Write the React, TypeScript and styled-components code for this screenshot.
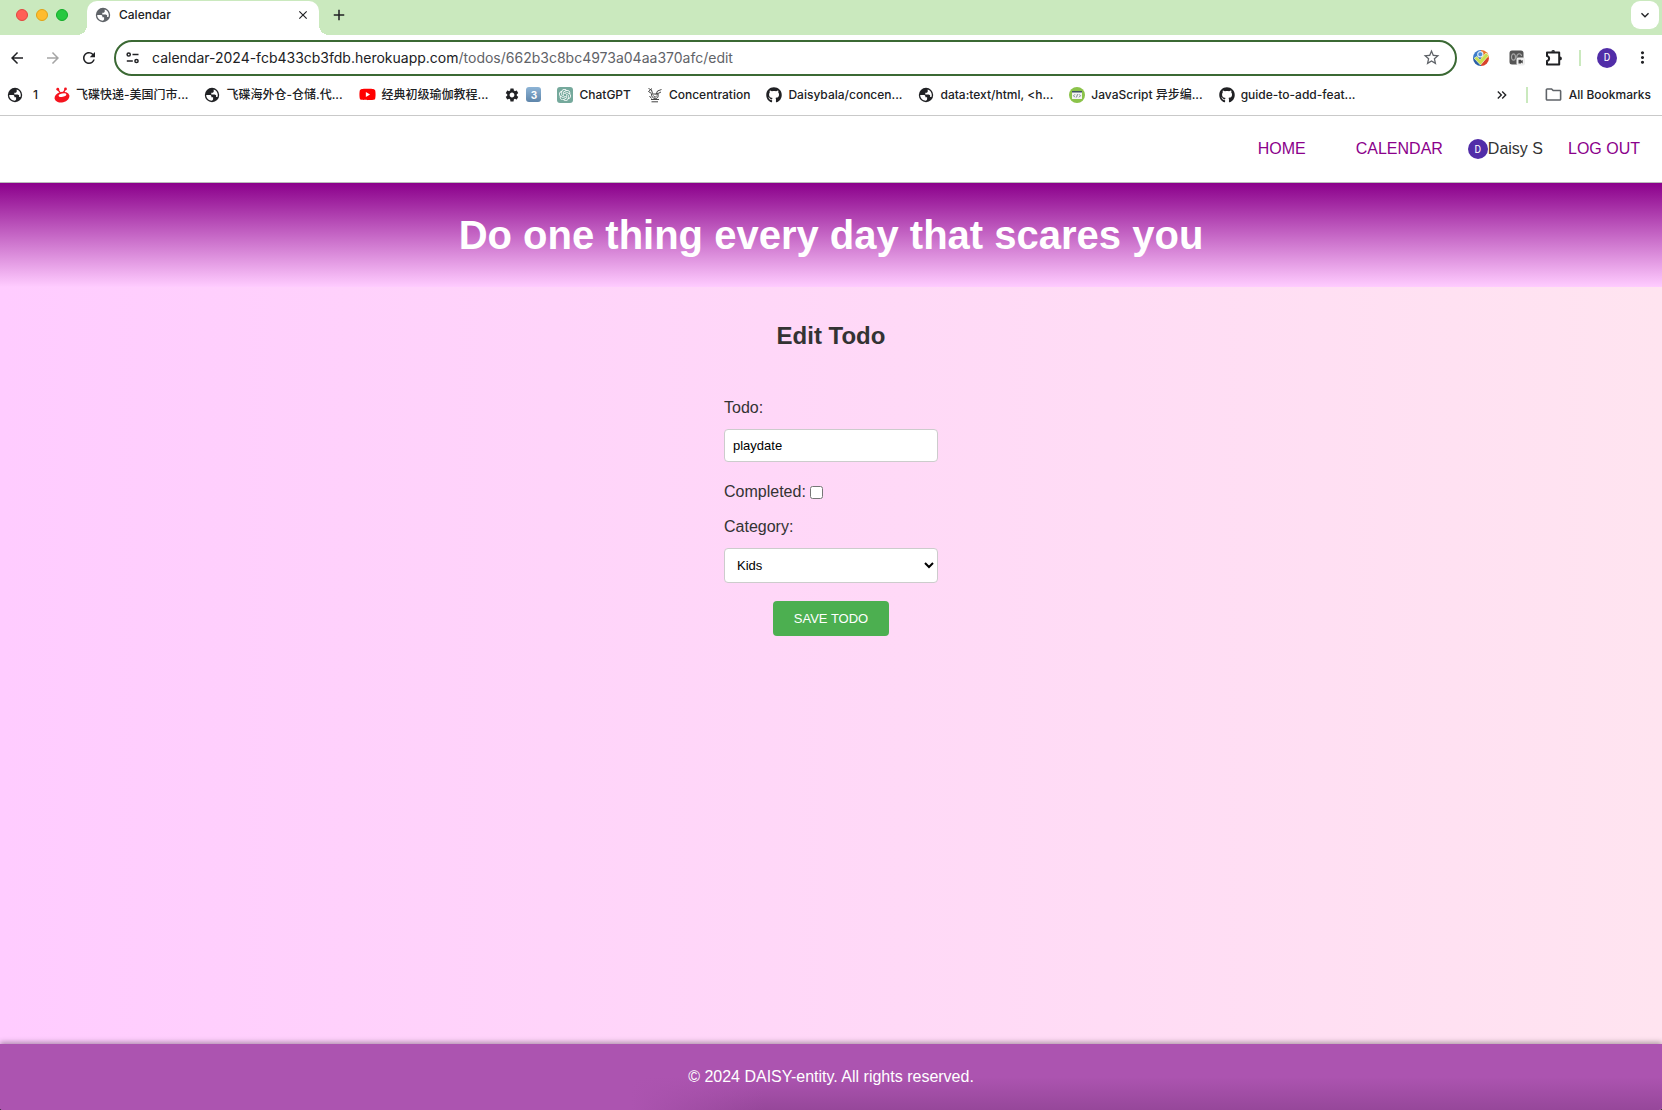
import React from "react";
import styled, { createGlobalStyle } from "styled-components";
import { FaGithub, FaYoutube } from "react-icons/fa";
import {
  MdArrowBack,
  MdArrowForward,
  MdRefresh,
  MdStarBorder,
  MdClose,
  MdAdd,
  MdMoreVert,
  MdSettings,
  MdOutlineFolder,
  MdKeyboardArrowDown,
  MdKeyboardDoubleArrowRight,
} from "react-icons/md";
import { SiOpenai } from "react-icons/si";

const GlobalStyle = createGlobalStyle`
  *, *::before, *::after { box-sizing: border-box; }
  body { margin: 0; color: #333; font-family: "Liberation Sans", Arial, sans-serif; font-size: 16px; }
  a { text-decoration: none; }
  button { font: inherit; color: inherit; background: none; border: 0; padding: 0; }
`;

const Window = styled.div`
  display: flex;
  flex-direction: column;
  min-height: 100vh;
  background: #111;
`;

/* ---------- Browser chrome ---------- */

const Chrome = styled.header`
  font-family: Inter, Roboto, "Noto Sans CJK SC", sans-serif;
  color: #202124;
  background: #fff;
  border-bottom: 1px solid #c9c9c9;
`;

const TabStrip = styled.div`
  display: flex;
  height: 35px;
  padding: 1px 3px 0 16px;
  background: #cae9be;
`;

const Lights = styled.div`
  display: flex;
  gap: 8px;
  padding-top: 8px;
  margin-right: 19px;
`;

const Light = styled.span<{ $fill: string; $edge: string }>`
  width: 12px;
  height: 12px;
  border-radius: 50%;
  background: ${(p) => p.$fill};
  border: 1px solid ${(p) => p.$edge};
`;

const Tab = styled.div`
  position: relative;
  display: flex;
  align-items: center;
  gap: 8px;
  width: 232px;
  padding: 0 9px 7px 8px;
  border-radius: 10px 10px 0 0;
  background: #fff;
  font-size: 12px;
  font-weight: 500;

  &::before,
  &::after {
    content: "";
    position: absolute;
    bottom: 0;
    width: 10px;
    height: 10px;
  }
  &::before {
    left: -10px;
    background: radial-gradient(circle at 0 0, transparent 10px, #fff 10px);
  }
  &::after {
    right: -10px;
    background: radial-gradient(circle at 100% 0, transparent 10px, #fff 10px);
  }
`;

const TabTitle = styled.span`
  flex: 1;
`;

const IconButton = styled.button`
  display: flex;
  align-items: center;
  justify-content: center;
`;

const NewTab = styled(IconButton)`
  height: 28px;
  margin-left: 11px;
`;

const TabSearch = styled(IconButton)`
  width: 28px;
  height: 28px;
  margin-left: auto;
  border-radius: 9px;
  background: #fff;
`;

const Toolbar = styled.div`
  display: flex;
  align-items: center;
  height: 45px;
  padding: 0 10px 0 8px;
`;

const NavButtons = styled.div`
  display: flex;
  gap: 18px;
  margin-right: 16px;
`;

const AddressBar = styled.div`
  display: flex;
  flex: 1;
  align-items: center;
  gap: 12px;
  height: 36px;
  padding: 0 14px 0 10px;
  border: 2px solid #3b6934;
  border-radius: 18px;
  background: #fff;
  font-size: 14px;
`;

const Url = styled.span`
  flex: 1;
`;

const UrlPath = styled.span`
  color: #5f6368;
`;

const ToolbarEnd = styled.div`
  display: flex;
  align-items: center;
  gap: 16px;
  margin-left: 16px;
`;

const Extensions = styled.div`
  display: flex;
  align-items: center;
  gap: 20px;
`;

const Divider = styled.span`
  width: 2px;
  height: 16px;
  background: #cae9be;
`;

const Avatar = styled.span`
  display: inline-flex;
  align-items: center;
  justify-content: center;
  width: 20px;
  height: 20px;
  border-radius: 50%;
  background: #512da8;
  color: #fff;
  font-family: Roboto, sans-serif;
  font-size: 10px;
`;

const Bookmarks = styled.div`
  display: flex;
  align-items: center;
  gap: 16px;
  height: 35px;
  padding: 0 11px 6px 7px;
  font-size: 12px;
  font-weight: 500;
`;

const Bookmark = styled.a<{ $gap?: number }>`
  display: flex;
  align-items: center;
  gap: ${(p) => p.$gap ?? 6}px;
  color: inherit;
  line-height: 16px;
  white-space: nowrap;
`;

const BookmarkText = styled.span`
  height: 16px;
`;

const Keycap = styled.span`
  display: flex;
  align-items: center;
  justify-content: center;
  width: 15px;
  height: 15px;
  border-radius: 3px;
  background: linear-gradient(#8db4d6, #5e85aa);
  color: #fff;
  font-size: 10px;
  font-weight: 700;
`;

const GptIcon = styled.span`
  display: flex;
  align-items: center;
  justify-content: center;
  width: 16px;
  height: 16px;
  border-radius: 3px;
  background: #75a99c;
  color: #fff;
`;

const BookmarkEnd = styled.div`
  display: flex;
  align-items: center;
  gap: 16px;
  margin-left: auto;
`;

/* ---------- Site ---------- */

const Page = styled.div`
  display: flex;
  flex: 1;
  flex-direction: column;
  overflow: hidden;
  border-radius: 0 0 5px 5px / 0 0 2px 2px;
  background: linear-gradient(to right, #fcf, #ffe4f0);
`;

const SiteNav = styled.nav`
  display: flex;
  align-items: center;
  justify-content: flex-end;
  height: 67px;
  padding: 0 22px;
  background: #fff;
  border-bottom: 1px solid #bbb;
`;

const NavLink = styled.a<{ $gap?: number }>`
  margin-right: ${(p) => p.$gap ?? 0}px;
  color: #8b008b;
`;

const User = styled.span`
  display: flex;
  align-items: center;
  margin-right: 25px;
`;

const Banner = styled.h1`
  margin: 0;
  padding: 29px 20px;
  background: linear-gradient(#8b008b, #fcf);
  color: #fff;
  font-size: 40px;
  line-height: 46px;
  text-align: center;
`;

const Main = styled.main`
  display: flex;
  flex: 1;
  flex-direction: column;
  align-items: center;
  padding-top: 35px;
`;

const Title = styled.h2`
  margin: 0 0 48px;
  font-size: 24px;
  line-height: 28px;
`;

const Form = styled.form`
  display: flex;
  flex-direction: column;
  width: 214px;
`;

const Label = styled.label`
  margin-bottom: 11px;
  line-height: 20px;
`;

const TextInput = styled.input`
  height: 33px;
  margin-bottom: 20px;
  padding: 0 8px;
  border: 1px solid #ccc;
  border-radius: 4px;
  background: #fff;
  color: #000;
  font: 13px "Liberation Sans", Arial, sans-serif;
`;

const CheckRow = styled.div`
  display: flex;
  align-items: center;
  gap: 4px;
  margin-bottom: 15px;
  line-height: 20px;
`;

const Checkbox = styled.input`
  width: 13px;
  height: 13px;
  margin: 0;
`;

const Select = styled.select`
  height: 35px;
  margin-bottom: 18px;
  padding: 0 0 0 8px;
  border: 1px solid #ccc;
  border-radius: 4px;
  background: #fff;
  color: #000;
  font: 13px "Liberation Sans", Arial, sans-serif;
`;

const SaveButton = styled.button`
  align-self: center;
  height: 35px;
  padding: 0 21px;
  border-radius: 4px;
  background: #4caf50;
  color: #fff;
  font-size: 13px;
`;

const Footer = styled.footer`
  padding: 23px 20px;
  background:
    linear-gradient(to right, #ac54b0 38%, transparent 46%),
    linear-gradient(#ac54b0 50%, #96479a);
  box-shadow: 0 -2px 5px rgba(0, 0, 0, 0.3);
  color: #fff;
  line-height: 20px;
  text-align: center;
`;

/* ---------- Icons ---------- */

const GlobeIcon = ({ color = "#202124" }: { color?: string }) => (
  <svg width="16" height="16" viewBox="0 0 16 16">
    <circle cx="8" cy="8" r="7.2" fill={color} />
    <path
      d="M2.200 8h3.600c1 0 1.600.700 1.600 1.500v.700h1.700v2.200L8 13.700c-3.300 0-5.800-2.500-5.800-5.700z"
      fill="#fff"
    />
    <path
      d="M9.700 2.500c2.400.700 4.100 2.900 4.100 5.500 0 .800-.200 1.500-.400 2.100h-1.300V8.300l-1.400-.900H7.300V5.700h1.600l.8-1z"
      fill="#fff"
    />
  </svg>
);

const PuzzleIcon = () => (
  <svg width="18" height="18" viewBox="0 0 18 18" fill="none" stroke="#202124">
    <path
      d="M2 3.500h12.200v12H2v-3.400c2.800-.600 2.800-4.400 0-5z"
      strokeWidth="2"
      strokeLinejoin="round"
    />
    <path d="M6.300 2.800a1.900 1.900 0 0 1 3.800 0zM15 7.500a1.900 1.900 0 0 1 0 3.800z" fill="#202124" stroke="none" />
  </svg>
);

const SiteInfoIcon = () => (
  <svg width="14" height="14" viewBox="0 0 14 14" fill="none" stroke="#202124" strokeWidth="1.5">
    <circle cx="2.700" cy="3.500" r="1.600" />
    <path d="M6.500 3.500H12.500M.800 10h6" />
    <circle cx="10.500" cy="10" r="1.600" />
  </svg>
);

const SaucerIcon = () => (
  <svg width="16" height="16" viewBox="0 0 17 17">
    <path d="M4 2.500 6.500 6M12 2.500 10 6" stroke="#f5141e" strokeWidth="1.400" />
    <circle cx="4" cy="2.400" r="1.500" fill="#f5141e" />
    <circle cx="12.200" cy="2" r="1.500" fill="#f5141e" />
    <ellipse cx="8.500" cy="10.800" rx="8" ry="5.600" fill="#f5141e" transform="rotate(-14 8.500 10.800)" />
    <ellipse cx="9" cy="8.600" rx="4.200" ry="1.700" fill="#fff" transform="rotate(-14 9 8.600)" />
  </svg>
);

const SketchIcon = () => (
  <svg width="16" height="16" viewBox="0 0 16 16" fill="none" stroke="#444" strokeWidth="1">
    <path d="M1.500 1.500l3 1.500 1 3.500M5 1.500l-3.500 3 3 2M14.500 2.500l-4 1.500-1.500 3.500M14 5l-4 2M4.500 7c0 3 1.500 4.500 4 4.500s3-2 2.500-4.500zM4 12.500h8M4.500 14.800h6.500M2.500 9l2 2.500M6.500 8.500l1.500 2 2-2" />
  </svg>
);

const CodeIcon = () => (
  <svg width="16" height="16" viewBox="0 0 16 16">
    <circle cx="8" cy="8" r="8" fill="#8bc34a" />
    <rect x="3" y="4" width="10" height="8" rx="0.500" fill="#f4f4f4" />
    <rect x="3" y="4" width="10" height="1.500" fill="#3f5263" />
    <path d="M6 7.300 4.500 8.800 6 10.300M10 7.300 11.500 8.800 10 10.300M8.500 7.200l-1 3.200" fill="none" stroke="#3f5263" strokeWidth="0.700" />
  </svg>
);

const CheckExtensionIcon = () => (
  <svg width="16" height="16" viewBox="0 0 16 16">
    <path d="M8 0a8 8 0 0 0-8 8h8z" fill="#3d7cc9" />
    <path d="M8 0a8 8 0 0 1 8 8H8z" fill="#e8742a" />
    <path d="M16 8a8 8 0 0 1-8 8V8z" fill="#d9432c" />
    <path d="M8 16a8 8 0 0 1-8-8h8z" fill="#2a5fa5" />
    <circle cx="7.300" cy="4.300" r="2.600" fill="#4f8fd6" stroke="#d8e8f8" strokeWidth="1.200" />
    <path d="M1.200 8.200 4 6.500l3 3.300L13 3l2.600 2.500L7.500 15z" fill="#c9e04f" stroke="#f6fbd0" strokeWidth="0.700" />
  </svg>
);

const RecorderIcon = () => (
  <svg width="16" height="16" viewBox="0 0 16 16">
    <rect x="0.500" y="0.500" width="14" height="14" rx="2.500" fill="#555" />
    <ellipse cx="4.500" cy="7" rx="2" ry="3.200" fill="none" stroke="#a5a5a5" strokeWidth="1.200" />
    <path d="M8 8.500C6.800 3 12.500 2.500 12.500 6" fill="none" stroke="#a5a5a5" strokeWidth="1.200" />
    <rect x="7.500" y="7.500" width="8.500" height="8" rx="2" fill="#eee" />
    <path d="M9.500 9.800h2.500v1l1.700-.8v3.400l-1.700-.8v.8H9.500z" fill="#444" />
  </svg>
);

interface BookmarkItem {
  icon: React.ReactNode;
  text?: string;
  keycap?: string;
  gap?: number;
}

const bookmarks: BookmarkItem[] = [
  { icon: <GlobeIcon />, text: "1", gap: 10 },
  { icon: <SaucerIcon />, text: "飞碟快递-美国门市..." },
  { icon: <GlobeIcon />, text: "飞碟海外仓-仓储.代..." },
  { icon: <FaYoutube size={17} color="#f00" />, text: "经典初级瑜伽教程..." },
  { icon: <MdSettings size={16} />, keycap: "3" },
  { icon: <GptIcon><SiOpenai size={12} /></GptIcon>, text: "ChatGPT" },
  { icon: <SketchIcon />, text: "Concentration" },
  { icon: <FaGithub size={16} />, text: "Daisybala/concen..." },
  { icon: <GlobeIcon />, text: "data:text/html, <h..." },
  { icon: <CodeIcon />, text: "JavaScript 异步编..." },
  { icon: <FaGithub size={16} />, text: "guide-to-add-feat..." },
];

export default function App() {
  return (
    <Window>
      <GlobalStyle />
      <Chrome>
        <TabStrip>
          <Lights>
            <Light $fill="#ff5f57" $edge="#e2463f" />
            <Light $fill="#febc2e" $edge="#e1a116" />
            <Light $fill="#28c840" $edge="#12ac28" />
          </Lights>
          <Tab>
            <GlobeIcon color="#5f6368" />
            <TabTitle>Calendar</TabTitle>
            <IconButton aria-label="Close tab"><MdClose size={14} /></IconButton>
          </Tab>
          <NewTab aria-label="New tab"><MdAdd size={18} /></NewTab>
          <TabSearch aria-label="Search tabs"><MdKeyboardArrowDown size={16} /></TabSearch>
        </TabStrip>
        <Toolbar>
          <NavButtons>
            <IconButton aria-label="Back"><MdArrowBack size={18} /></IconButton>
            <IconButton aria-label="Forward"><MdArrowForward size={18} color="#a5a5a5" /></IconButton>
            <IconButton aria-label="Reload"><MdRefresh size={18} /></IconButton>
          </NavButtons>
          <AddressBar>
            <SiteInfoIcon />
            <Url>calendar-2024-fcb433cb3fdb.herokuapp.com<UrlPath>/todos/662b3c8bc4973a04aa370afc/edit</UrlPath></Url>
            <IconButton aria-label="Bookmark this page"><MdStarBorder size={19} color="#5f6368" /></IconButton>
          </AddressBar>
          <ToolbarEnd>
            <Extensions>
              <IconButton aria-label="Checker extension"><CheckExtensionIcon /></IconButton>
              <IconButton aria-label="Recorder extension"><RecorderIcon /></IconButton>
              <IconButton aria-label="Extensions"><PuzzleIcon /></IconButton>
            </Extensions>
            <Divider />
            <Avatar>D</Avatar>
            <IconButton aria-label="Menu"><MdMoreVert size={19} /></IconButton>
          </ToolbarEnd>
        </Toolbar>
        <Bookmarks>
          {bookmarks.map((b, i) => (
            <Bookmark href="#" key={i} $gap={b.gap}>
              {b.icon}
              {b.keycap ? <Keycap>{b.keycap}</Keycap> : <BookmarkText>{b.text}</BookmarkText>}
            </Bookmark>
          ))}
          <BookmarkEnd>
            <IconButton aria-label="More bookmarks"><MdKeyboardDoubleArrowRight size={16} /></IconButton>
            <Divider />
            <Bookmark href="#">
              <MdOutlineFolder size={19} color="#5f6368" />
              <BookmarkText>All Bookmarks</BookmarkText>
            </Bookmark>
          </BookmarkEnd>
        </Bookmarks>
      </Chrome>
      <Page>
        <SiteNav>
          <NavLink href="#" $gap={50}>HOME</NavLink>
          <NavLink href="#" $gap={25}>CALENDAR</NavLink>
          <User><Avatar>D</Avatar>Daisy S</User>
          <NavLink href="#">LOG OUT</NavLink>
        </SiteNav>
        <Banner>Do one thing every day that scares you</Banner>
        <Main>
          <Title>Edit Todo</Title>
          <Form>
            <Label htmlFor="todo">Todo:</Label>
            <TextInput id="todo" defaultValue="playdate" />
            <CheckRow>
              <label htmlFor="completed">Completed:</label>
              <Checkbox id="completed" type="checkbox" />
            </CheckRow>
            <Label htmlFor="category">Category:</Label>
            <Select id="category" defaultValue="Kids">
              <option>Kids</option>
            </Select>
            <SaveButton type="button">SAVE TODO</SaveButton>
          </Form>
        </Main>
        <Footer>© 2024 DAISY-entity. All rights reserved.</Footer>
      </Page>
    </Window>
  );
}
